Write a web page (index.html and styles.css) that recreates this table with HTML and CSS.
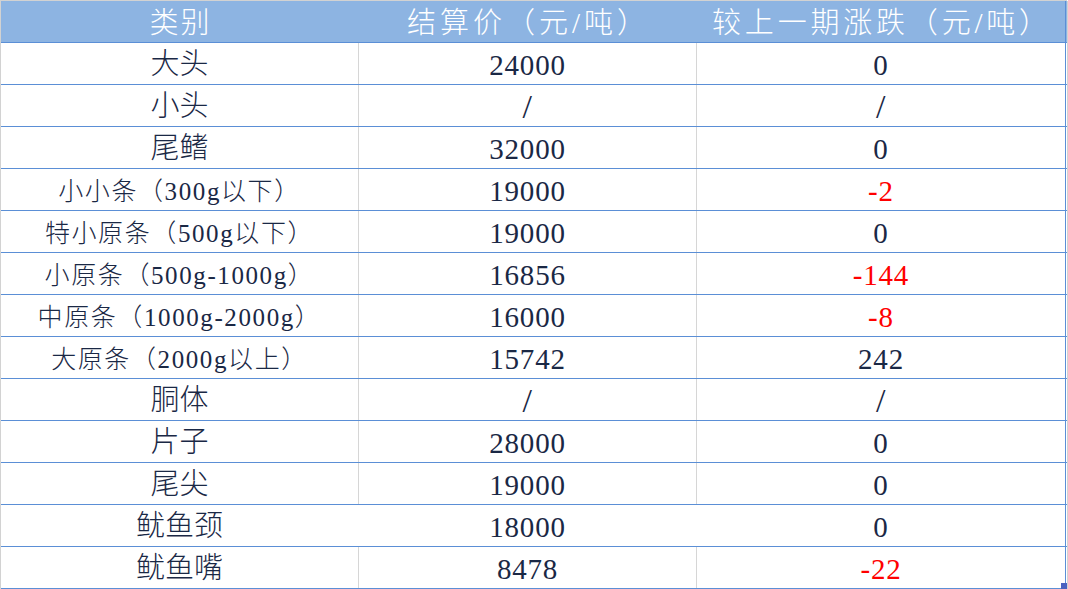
FILE: index.html
```html
<!DOCTYPE html>
<html lang="zh">
<head>
<meta charset="utf-8">
<title>价格表</title>
<link rel="stylesheet" href="styles.css">
</head>
<body>
<div class="sheet">
  <div class="row head">
    <div class="cell c1">类别</div>
    <div class="cell c2 wide">结算价（元/吨）</div>
    <div class="cell c3 wider">较上一期涨跌（元/吨）</div>
  </div>
  <div class="row"><div class="cell c1">大头</div><div class="cell c2 num">24000</div><div class="cell c3 num">0</div></div>
  <div class="row"><div class="cell c1">小头</div><div class="cell c2 num slash">/</div><div class="cell c3 num slash">/</div></div>
  <div class="row"><div class="cell c1">尾鳍</div><div class="cell c2 num">32000</div><div class="cell c3 num">0</div></div>
  <div class="row"><div class="cell c1 small">小小条（300g以下）</div><div class="cell c2 num">19000</div><div class="cell c3 num neg">-2</div></div>
  <div class="row"><div class="cell c1 small">特小原条（500g以下）</div><div class="cell c2 num">19000</div><div class="cell c3 num">0</div></div>
  <div class="row"><div class="cell c1 small">小原条（500g-1000g）</div><div class="cell c2 num">16856</div><div class="cell c3 num neg">-144</div></div>
  <div class="row"><div class="cell c1 small">中原条（1000g-2000g）</div><div class="cell c2 num">16000</div><div class="cell c3 num neg">-8</div></div>
  <div class="row"><div class="cell c1 small">大原条（2000g以上）</div><div class="cell c2 num">15742</div><div class="cell c3 num">242</div></div>
  <div class="row"><div class="cell c1">胴体</div><div class="cell c2 num slash">/</div><div class="cell c3 num slash">/</div></div>
  <div class="row"><div class="cell c1">片子</div><div class="cell c2 num">28000</div><div class="cell c3 num">0</div></div>
  <div class="row"><div class="cell c1">尾尖</div><div class="cell c2 num">19000</div><div class="cell c3 num">0</div></div>
  <div class="row nolines"><div class="cell c1">鱿鱼颈</div><div class="cell c2 num">18000</div><div class="cell c3 num">0</div></div>
  <div class="row last"><div class="cell c1">鱿鱼嘴</div><div class="cell c2 num">8478</div><div class="cell c3 num neg">-22</div><span class="handle"></span></div>
</div>
</body>
</html>
```
FILE: styles.css
```css
html, body {
  margin: 0;
  padding: 0;
  background: #ffffff;
}
body {
  width: 1068px;
  height: 589px;
  overflow: hidden;
  font-family: "Liberation Serif", "Noto Sans CJK SC", serif;
  font-weight: 300;
  color: #1a2845;
}
.sheet {
  width: 1067px;
  border-top: 1px solid #d2d2d2;
  border-left: 1px solid #d2d2d2;
  box-sizing: border-box;
  position: relative;
}
.sheet::after {
  content: "";
  position: absolute;
  top: 0;
  right: -1px;
  width: 1px;
  height: 589px;
  background: #d2d2d2;
}
.row {
  display: grid;
  grid-template-columns: 358px 338px 369px;
  height: 42px;
  border-bottom: 1px solid #5b8fd6;
  box-sizing: border-box;
  position: relative;
}
.head {
  background: #8db4e2;
  color: #ffffff;
}
.cell {
  display: flex;
  align-items: center;
  justify-content: center;
  font-size: 29px;
  line-height: 1;
  white-space: nowrap;
  box-sizing: border-box;
  padding-top: 2px;
}
.c1 { border-right: 1px solid #d6d6d6; }
.c2 { border-right: 1px solid #d6d6d6; }
.c3 { border-right: 1px solid #5b8fd6; }
.head .c1, .head .c2 { border-right-color: transparent; }
.nolines .c1, .nolines .c2 { border-right-color: transparent; }
.head .cell {
  font-size: 29px;
  letter-spacing: 2px;
  padding-left: 2px;
  padding-top: 3px;
}
.head .wide { letter-spacing: 4px; }
.head .wider { letter-spacing: 3.8px; }
.num {
  letter-spacing: 0.8px;
  padding-top: 4px;
}
.slash {
  font-size: 34px;
  padding-top: 3px;
}
.small {
  font-size: 25px;
  letter-spacing: 1.6px;
  padding-top: 3px;
}
.neg { color: #ff0000; }
.handle {
  position: absolute;
  right: 0;
  bottom: -1px;
  width: 6px;
  height: 6px;
  background: #4a62c0;
}
```
